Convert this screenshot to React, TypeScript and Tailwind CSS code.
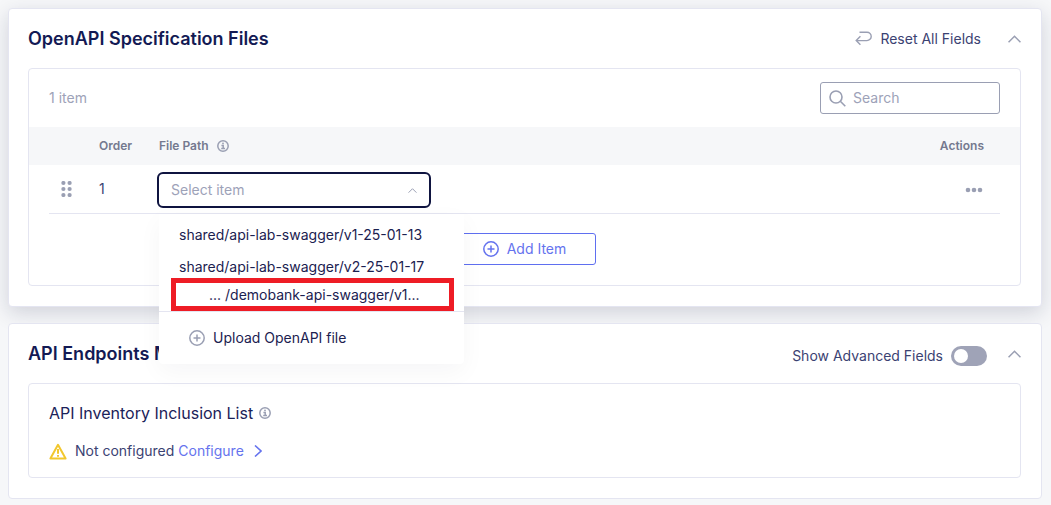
import { useState, type ReactNode } from "react";

const files = ["shared/api-lab-swagger/v1-25-01-13", "shared/api-lab-swagger/v2-25-01-17"];

function ChevronUp({ className }: { className: string }) {
  return (
    <svg viewBox="0 0 12 7" className={className} fill="none" stroke="currentColor" strokeWidth="1.4" aria-hidden="true">
      <path d="M0.5 6.5 6 1l5.5 5.5" />
    </svg>
  );
}

function InfoIcon() {
  return (
    <svg viewBox="0 0 12 12" className="size-3 shrink-0 text-[#9a9fb3]" fill="none" stroke="currentColor" strokeWidth="1.5" aria-hidden="true">
      <circle cx="6" cy="6" r="5.2" />
      <path d="M4.4 5.4h1.8v3M4.2 8.6h3.8" />
      <circle cx="6" cy="3.4" r="0.9" fill="currentColor" stroke="none" />
    </svg>
  );
}

function PlusCircle({ className }: { className: string }) {
  return (
    <svg viewBox="0 0 16 16" className={className} fill="none" stroke="currentColor" strokeWidth="1.5" aria-hidden="true">
      <circle cx="8" cy="8" r="7.2" />
      <path d="M8 4.5v7M4.5 8h7" />
    </svg>
  );
}

function Card({ title, actions, className, children }: { title: string; actions: ReactNode; className: string; children: ReactNode }) {
  return (
    <section className={`rounded border border-[#e4e5f1] bg-white pr-5 pb-5 pl-[19px] ${className}`}>
      <header className="flex h-[59px] items-center justify-between">
        <h2 className="text-lg font-semibold text-[#131a54]">{title}</h2>
        <div className="flex items-center">
          {actions}
          <button type="button" aria-label="Collapse section" className="flex w-[34px] justify-end">
            <ChevronUp className="h-2 w-[13px] text-[#9a9fb3]" />
          </button>
        </div>
      </header>
      <div className="rounded border border-[#e4e5f1]">{children}</div>
    </section>
  );
}

function FileMenu() {
  return (
    <div className="absolute top-full left-[2px] z-20 mt-[6px] w-[305px] rounded-b bg-white pt-[5px] text-left text-sm text-[#1b2150] shadow-[0_8px_24px_rgba(20,25,60,0.04)]">
      {files.map((file) => (
        <button key={file} type="button" className="flex h-8 w-full items-center px-5">
          {file}
        </button>
      ))}
      <button type="button" className="relative -mt-[5px] ml-3 flex h-[33px] w-[283px] items-center border-[5px] border-[#ee1c25] bg-white pl-[33px]">
        ... /demobank-api-swagger/v1...
      </button>
      <button type="button" className="flex h-[53px] w-full items-center gap-2 border-t border-[#e4e5f1] pl-[30px]">
        <PlusCircle className="size-4 text-[#9a9fb3]" />
        Upload OpenAPI file
      </button>
    </div>
  );
}

export default function App() {
  const [advanced, setAdvanced] = useState(false);

  return (
    <main className="flex min-h-screen flex-col gap-4 bg-[#f6f7f9] py-2 pr-[9px] pl-2 font-['Inter',sans-serif] text-sm text-[#3b4272]">
      <Card
        title="OpenAPI Specification Files"
        className="shadow-[0_6px_20px_rgba(20,25,60,0.16)]"
        actions={
          <button type="button" className="mr-[6px] flex items-center gap-2">
            <svg viewBox="0 0 17 15" className="h-[15px] w-[17px] text-[#9a9fb3]" fill="none" stroke="currentColor" strokeWidth="1.4" aria-hidden="true">
              <path d="M4.5 1.2H12a4.2 4.2 0 0 1 0 8.4H1.2M5.4 5.2 1.2 9.6l4.2 4.2" />
            </svg>
            Reset All Fields
          </button>
        }
      >
        <div className="flex h-[58px] items-center justify-between px-5">
          <p className="text-[#9da2b8]">1 item</p>
          <label className="flex h-8 w-[180px] items-center gap-[7px] rounded-[3px] border border-[#9a9fb3] px-2">
            <svg viewBox="0 0 17 17" className="size-[17px] shrink-0 text-[#9a9fb3]" fill="none" stroke="currentColor" strokeWidth="1.6" aria-hidden="true">
              <circle cx="7" cy="7" r="6" />
              <path d="m11.3 11.3 5 5" />
            </svg>
            <input type="search" aria-label="Search" placeholder="Search" className="w-full min-w-0 outline-none placeholder:text-[#9da2b8]" />
          </label>
        </div>

        <table className="w-full table-fixed text-left">
          <thead className="bg-[#f6f7f9] text-xs text-[#74798f]">
            <tr className="h-[38px]">
              <th className="w-[70px]" aria-label="Reorder" />
              <th className="w-[58px] font-semibold">Order</th>
              <th className="pl-[2px] font-semibold">
                <span className="flex items-center gap-2">
                  File Path
                  <InfoIcon />
                </span>
              </th>
              <th className="w-[120px] pr-9 text-right font-semibold">Actions</th>
            </tr>
          </thead>
          <tbody>
            <tr className="h-12">
              <td className="pl-8">
                <svg viewBox="0 0 11 16" className="h-4 w-[11px] text-[#9a9fb3]" fill="currentColor" aria-hidden="true">
                  <circle cx="2.4" cy="2" r="2.1" />
                  <circle cx="8.6" cy="2" r="2.1" />
                  <circle cx="2.4" cy="8" r="2.1" />
                  <circle cx="8.6" cy="8" r="2.1" />
                  <circle cx="2.4" cy="14" r="2.1" />
                  <circle cx="8.6" cy="14" r="2.1" />
                </svg>
              </td>
              <td>1</td>
              <td>
                <div className="relative mt-[2px] w-[274px]">
                  <select
                    aria-label="File path"
                    defaultValue=""
                    className="block h-9 w-full appearance-none rounded-md border-2 border-[#0f1440] bg-white px-3 text-[#9da2b8] outline-none"
                  >
                    <option value="">Select item</option>
                    {files.map((file) => (
                      <option key={file}>{file}</option>
                    ))}
                  </select>
                  <ChevronUp className="pointer-events-none absolute top-4 right-[14px] h-[5px] w-[9px] text-[#9a9fb3]" />
                  <FileMenu />
                </div>
              </td>
              <td className="pr-9 text-right">
                <button type="button" aria-label="Row actions" className="align-middle">
                  <svg viewBox="0 0 18 6" className="h-[6px] w-[20px] text-[#9a9fb3]" fill="currentColor" aria-hidden="true">
                    <circle cx="3" cy="3" r="2.3" />
                    <circle cx="9" cy="3" r="2.3" />
                    <circle cx="15" cy="3" r="2.3" />
                  </svg>
                </button>
              </td>
            </tr>
          </tbody>
        </table>

        <div className="mx-5 flex justify-center border-t border-[#e4e5f1] pt-[19px] pb-5">
          <button type="button" className="flex h-8 items-center gap-2 rounded-[3px] border border-[#5f6ff0] px-[29px] text-[#6573ee]">
            <PlusCircle className="size-4" />
            Add Item
          </button>
        </div>
      </Card>

      <Card
        title="API Endpoints M"
        className=""
        actions={
          <label className="mt-1 flex items-center gap-2">
            Show Advanced Fields
            <input
              type="checkbox"
              role="switch"
              checked={advanced}
              onChange={(event) => setAdvanced(event.target.checked)}
              className="flex h-5 w-9 appearance-none items-center rounded-full bg-[#9fa3b7] px-[3px] before:size-[14px] before:rounded-full before:bg-white checked:justify-end checked:bg-[#5f6ff0]"
            />
          </label>
        }
      >
        <div className="px-5 pt-[18px] pb-4">
          <h3 className="flex items-center gap-[6px] text-base leading-[22px] text-[#1b2259]">
            API Inventory Inclusion List
            <InfoIcon />
          </h3>
          <p className="mt-[17px] flex items-center leading-5">
            <svg viewBox="0 0 18 17" className="mr-2 h-[17px] w-[18px]" fill="none" stroke="#f2c72e" strokeWidth="2" aria-hidden="true">
              <path d="M9 1.8 16.6 15.6H1.4Z" strokeLinejoin="round" />
              <path d="M9 6v4.8M9 12v1.8" />
            </svg>
            Not configured&nbsp;
            <a href="#configure" className="flex items-center gap-[10px] text-[#6573ee]">
              Configure
              <svg viewBox="0 0 8 12" className="h-3 w-2" fill="none" stroke="currentColor" strokeWidth="1.6" aria-hidden="true">
                <path d="m1 0.5 6 5.5-6 5.5" />
              </svg>
            </a>
          </p>
        </div>
      </Card>
    </main>
  );
}
